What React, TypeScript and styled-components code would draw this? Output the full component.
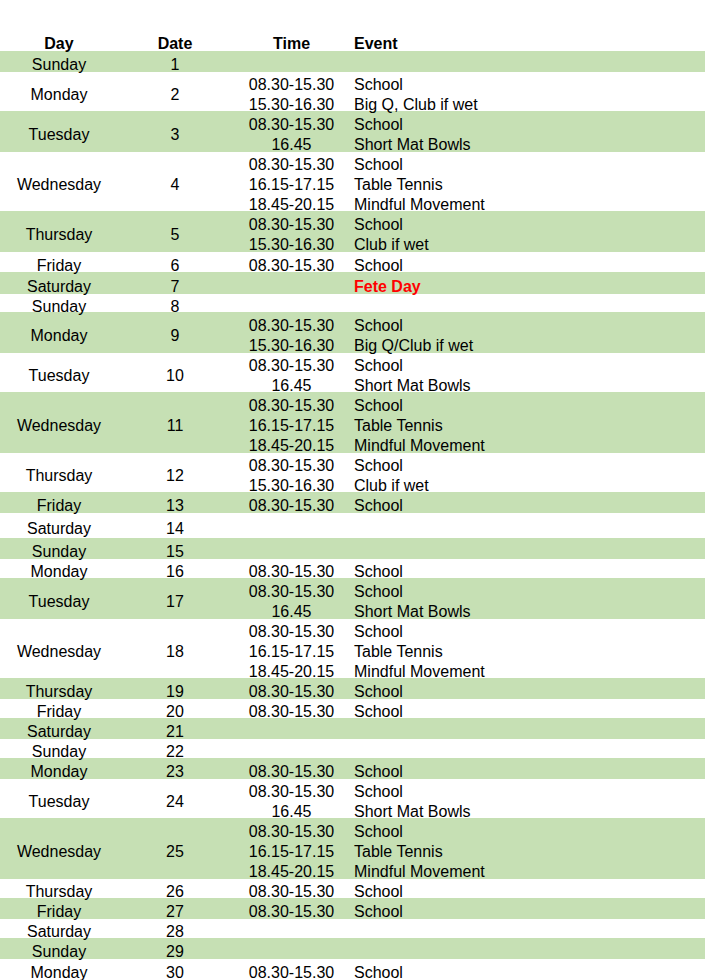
import styled, { createGlobalStyle } from "styled-components";

const GlobalStyle = createGlobalStyle`
  html, body {
    margin: 0;
    padding: 0;
    background: #ffffff;
  }
  body {
    font-family: "Liberation Sans", Arial, sans-serif;
    font-size: 16px;
    color: #000000;
  }
`;

type Item = { time: string; event: string; alert?: boolean };
type Entry = { day: string; date: number; h: number; items: Item[] };

const school = (time = "08.30-15.30"): Item => ({ time, event: "School" });
const bowls: Item = { time: "16.45", event: "Short Mat Bowls" };
const tennis: Item = { time: "16.15-17.15", event: "Table Tennis" };
const mindful: Item = { time: "18.45-20.15", event: "Mindful Movement" };

// heights measured off the sheet, one 20px line per entry roughly
const entries: Entry[] = [
  { day: "Sunday", date: 1, h: 21, items: [] },
  { day: "Monday", date: 2, h: 39, items: [school(), { time: "15.30-16.30", event: "Big Q, Club if wet" }] },
  { day: "Tuesday", date: 3, h: 41, items: [school(), bowls] },
  { day: "Wednesday", date: 4, h: 59, items: [school(), tennis, mindful] },
  { day: "Thursday", date: 5, h: 41, items: [school(), { time: "15.30-16.30", event: "Club if wet" }] },
  { day: "Friday", date: 6, h: 20, items: [school()] },
  { day: "Saturday", date: 7, h: 22, items: [{ time: "", event: "Fete Day", alert: true }] },
  { day: "Sunday", date: 8, h: 18, items: [] },
  { day: "Monday", date: 9, h: 41, items: [school(), { time: "15.30-16.30", event: "Big Q/Club if wet" }] },
  { day: "Tuesday", date: 10, h: 39, items: [school(), bowls] },
  { day: "Wednesday", date: 11, h: 61, items: [school(), tennis, mindful] },
  { day: "Thursday", date: 12, h: 39, items: [school(), { time: "15.30-16.30", event: "Club if wet" }] },
  { day: "Friday", date: 13, h: 21, items: [school()] },
  { day: "Saturday", date: 14, h: 25, items: [] },
  { day: "Sunday", date: 15, h: 21, items: [] },
  { day: "Monday", date: 16, h: 19, items: [school()] },
  { day: "Tuesday", date: 17, h: 41, items: [school(), bowls] },
  { day: "Wednesday", date: 18, h: 59, items: [school(), tennis, mindful] },
  { day: "Thursday", date: 19, h: 21, items: [school()] },
  { day: "Friday", date: 20, h: 19, items: [school()] },
  { day: "Saturday", date: 21, h: 21, items: [] },
  { day: "Sunday", date: 22, h: 19, items: [] },
  { day: "Monday", date: 23, h: 21, items: [school()] },
  { day: "Tuesday", date: 24, h: 39, items: [school(), bowls] },
  { day: "Wednesday", date: 25, h: 61, items: [school(), tennis, mindful] },
  { day: "Thursday", date: 26, h: 19, items: [school()] },
  { day: "Friday", date: 27, h: 21, items: [school()] },
  { day: "Saturday", date: 28, h: 19, items: [] },
  { day: "Sunday", date: 29, h: 21, items: [] },
  { day: "Monday", date: 30, h: 21, items: [school()] },
];

const Sheet = styled.div`
  padding-top: 31px;
  width: 100%;
  height: 980px;
  box-sizing: border-box;
  overflow: hidden;
`;

const Row = styled.div<{ $h: number; $shaded?: boolean }>`
  display: grid;
  grid-template-columns: 118px 114px 119px 1fr;
  height: ${(p) => p.$h}px;
  background: ${(p) => (p.$shaded ? "#c6e0b4" : "transparent")};
`;

const HeaderRow = styled(Row)`
  font-weight: 700;

  & > div {
    padding-top: 5px;
  }
`;

const Cell = styled.div<{ $align?: "left" | "center" }>`
  display: flex;
  flex-direction: column;
  justify-content: center;
  align-items: ${(p) => (p.$align === "left" ? "flex-start" : "center")};
  padding-top: 7px;
  padding-left: ${(p) => (p.$align === "left" ? "3px" : "0")};
  box-sizing: border-box;
  line-height: 20px;
  white-space: nowrap;
  min-height: 0;
`;

const Line = styled.span<{ $alert?: boolean }>`
  display: block;
  height: 20px;
  color: ${(p) => (p.$alert ? "#ff0000" : "inherit")};
  font-weight: ${(p) => (p.$alert ? 700 : "inherit")};
`;

export default function App() {
  return (
    <>
      <GlobalStyle />
      <Sheet>
        <HeaderRow $h={20}>
          <Cell>Day</Cell>
          <Cell>Date</Cell>
          <Cell>Time</Cell>
          <Cell $align="left">Event</Cell>
        </HeaderRow>
        {entries.map((e, i) => (
          <Row key={e.date} $h={e.h} $shaded={i % 2 === 0}>
            <Cell>{e.day}</Cell>
            <Cell>{e.date}</Cell>
            <Cell>
              {e.items.map((it, j) => (
                <Line key={j}>{it.time}</Line>
              ))}
            </Cell>
            <Cell $align="left">
              {e.items.map((it, j) => (
                <Line key={j} $alert={it.alert}>
                  {it.event}
                </Line>
              ))}
            </Cell>
          </Row>
        ))}
      </Sheet>
    </>
  );
}
